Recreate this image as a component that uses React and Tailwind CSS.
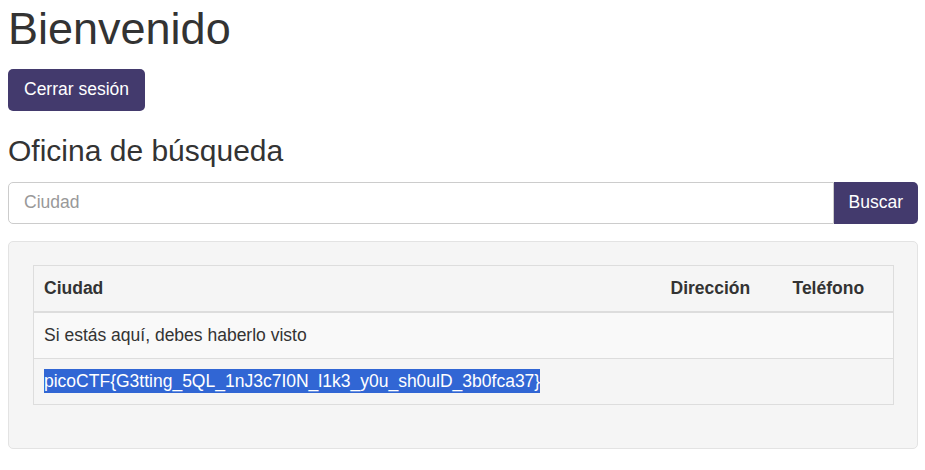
export default function App() {
  return (
    <div
      className="min-h-[470px] bg-white pl-2 pr-[7px] text-[#333]"
      style={{ fontFamily: '"Liberation Sans", Arial, sans-serif' }}
    >
      <h1 className="pt-1 text-[45px] leading-[1.1]">Bienvenido</h1>
      <button className="mt-[15px] h-[42px] rounded-[5px] bg-[#433a6d] px-4 text-[17.5px] text-white">
        Cerrar sesión
      </button>
      <h3 className="mt-[23px] text-[30px] leading-[1.1]">Oficina de búsqueda</h3>
      <div className="mt-[15px] flex h-[42px]">
        <input
          placeholder="Ciudad"
          className="h-full flex-1 rounded-l-[5px] border border-[#ccc] bg-white px-[15px] text-[17.5px] outline-none placeholder:text-[#999]"
        />
        <button className="h-full rounded-r-[5px] bg-[#433a6d] px-[15px] text-[17.5px] text-white">
          Buscar
        </button>
      </div>
      <div className="mt-[17px] rounded-[5px] border border-[#e3e3e3] bg-[#f5f5f5] pb-[43px] pl-6 pr-[23px] pt-[23px]">
        <table className="w-full border-collapse border border-[#ddd] text-[17.5px]">
          <thead>
            <tr className="h-[47px] border-b-2 border-[#ddd] text-left font-bold">
              <th className="px-[10px]">Ciudad</th>
              <th className="w-[122px] px-[10px]">Dirección</th>
              <th className="w-[111px] px-[10px]">Teléfono</th>
            </tr>
          </thead>
          <tbody>
            <tr className="h-[46px] border-b border-[#ddd] bg-[#f9f9f9]">
              <td className="px-[10px]">Si estás aquí, debes haberlo visto</td>
              <td></td>
              <td></td>
            </tr>
            <tr className="h-[46px]">
              <td className="px-[10px]">
                <span className="bg-[#3166d4] py-[2px] text-white">
                  picoCTF{"{"}G3tting_5QL_1nJ3c7I0N_l1k3_y0u_sh0ulD_3b0fca37{"}"}
                </span>
              </td>
              <td></td>
              <td></td>
            </tr>
          </tbody>
        </table>
      </div>
    </div>
  );
}
